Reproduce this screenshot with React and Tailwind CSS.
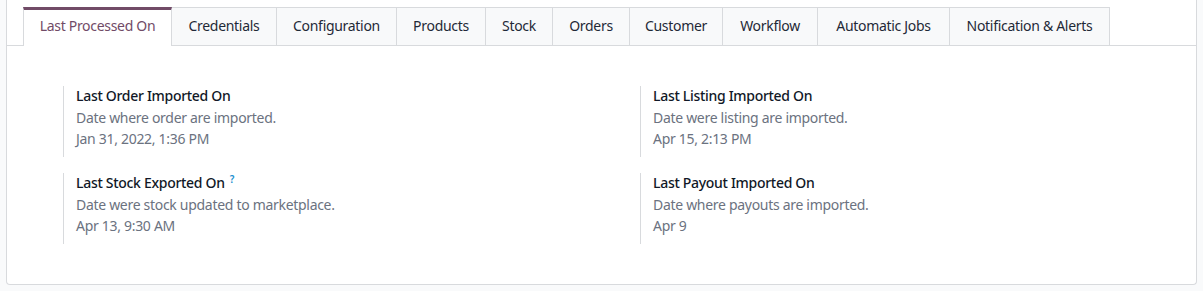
import React from "react";

const tabs = [
  { label: "Last Processed On", w: "w-[149px]" },
  { label: "Credentials", w: "w-[105px]" },
  { label: "Configuration", w: "w-[120px]" },
  { label: "Products", w: "w-[89px]" },
  { label: "Stock", w: "w-[67px]" },
  { label: "Orders", w: "w-[77px]" },
  { label: "Customer", w: "w-[93px]" },
  { label: "Workflow", w: "w-[95px]" },
  { label: "Automatic Jobs", w: "w-[132px]" },
  { label: "Notification & Alerts", w: "w-[160px]" },
];

const fields = [
  { title: "Last Order Imported On", help: "Date where order are imported.", value: "Jan 31, 2022, 1:36 PM" },
  { title: "Last Listing Imported On", help: "Date were listing are imported.", value: "Apr 15, 2:13 PM" },
  { title: "Last Stock Exported On", help: "Date were stock updated to marketplace.", value: "Apr 13, 9:30 AM", tip: true },
  { title: "Last Payout Imported On", help: "Date where payouts are imported.", value: "Apr 9" },
];

const Field = ({ title, help, value, tip }) => (
  <div className="border-l border-[#d8dadd] pl-[12px] pb-[8px] leading-[21px] text-[14px] tracking-[-0.3px]">
    <div className="text-[#111827] font-medium -mt-[1px] mb-[1px]">
      {title}
      {tip && <sup className="text-[#1a8fd0] ml-[5px] text-[10px] font-semibold">?</sup>}
    </div>
    <div className="text-[#6b7280]">{help}</div>
    <div className="text-[#6b7280]">{value}</div>
  </div>
);

export default function App() {
  return (
    <div className="min-h-screen bg-[#f9fafb] px-[6px] pb-[6px]" style={{ fontFamily: '"Noto Sans", "Open Sans", sans-serif' }}>
      <div className="bg-white border-x border-b border-[#d8dadd] rounded-b-[4px] h-[285px]">
        <div className="pt-[7px] pl-[16px] border-b border-[#d8dadd] flex">
          {tabs.map((t, i) =>
            i === 0 ? (
              <div
                key={t.label}
                className={`${t.w} h-[39px] -mb-[1px] pb-[6px] flex items-center justify-center bg-white border-x border-[#d8dadd] border-t-[3px] border-t-[#714b67] text-[#714b67] text-[14px] tracking-[-0.3px] whitespace-nowrap`}
              >
                {t.label}
              </div>
            ) : (
              <div
                key={t.label}
                className={`${t.w} h-[38px] pb-[2px] flex items-center justify-center bg-[#f8f9fa] border-t border-r border-[#d8dadd] text-[#1f2937] text-[14px] tracking-[-0.3px] whitespace-nowrap`}
              >
                {t.label}
              </div>
            )
          )}
        </div>
        <div className="grid grid-cols-[577px_1fr] gap-y-[16px] pl-[56px] pt-[40px]">
          {fields.map((f) => (
            <Field key={f.title} {...f} />
          ))}
        </div>
      </div>
    </div>
  );
}
